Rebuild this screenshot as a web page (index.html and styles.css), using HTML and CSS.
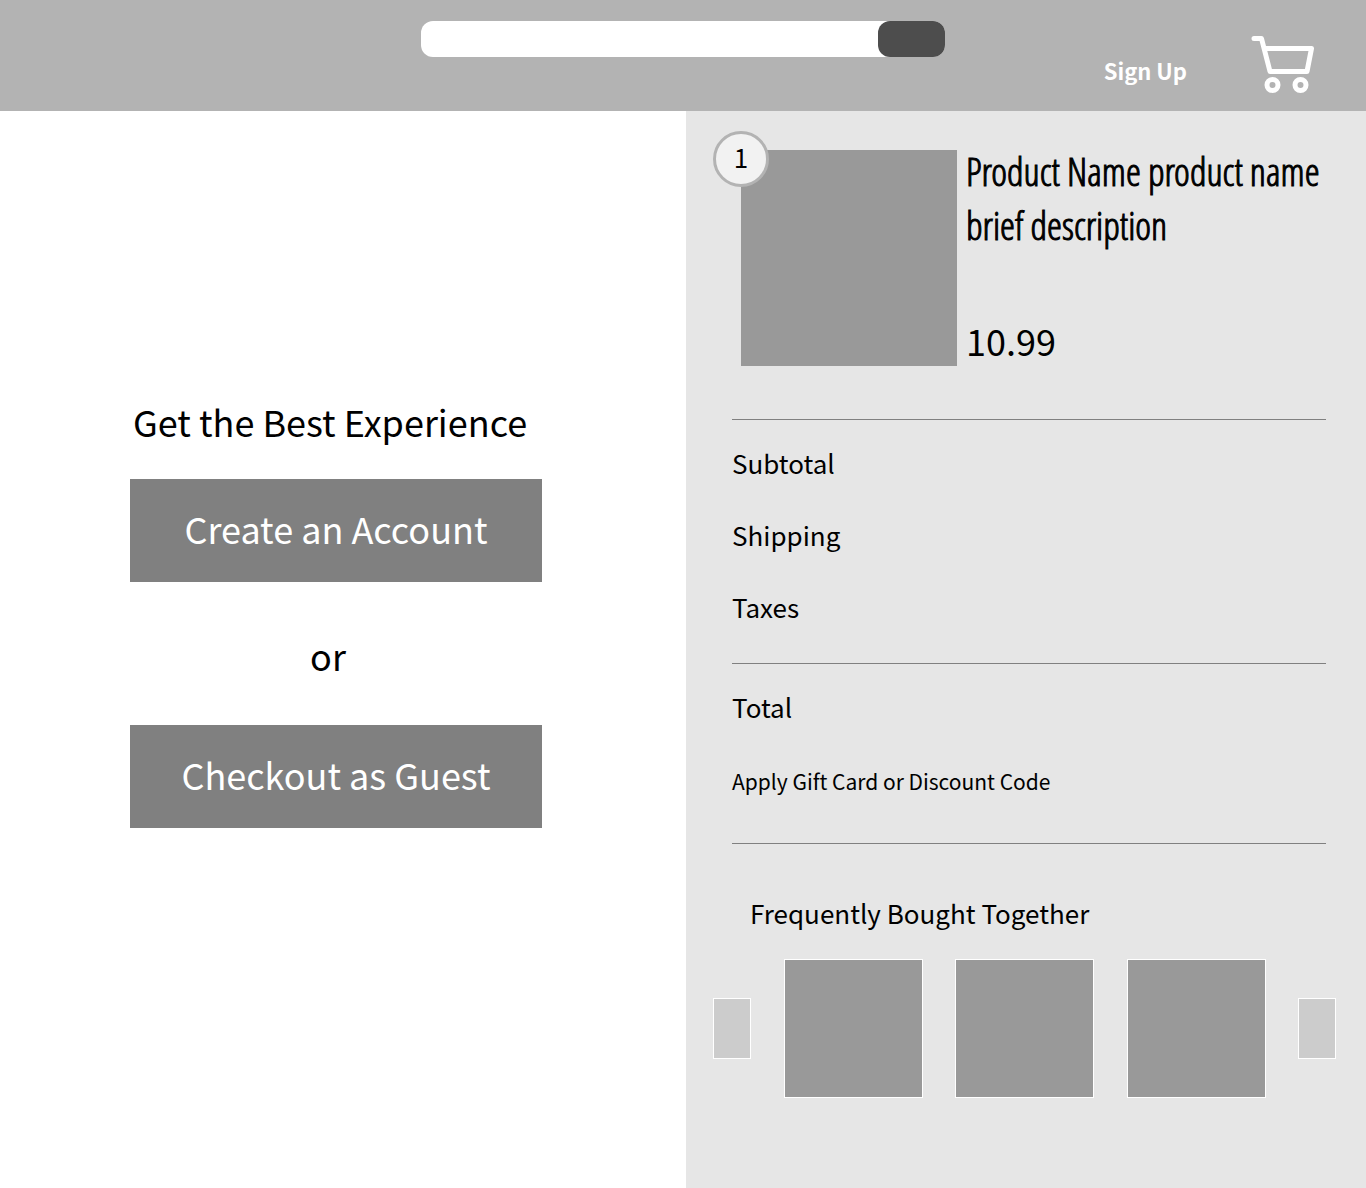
FILE: index.html
```html
<!DOCTYPE html>
<html lang="en">
<head>
<meta charset="utf-8">
<meta name="viewport" content="width=device-width, initial-scale=1">
<title>Checkout</title>
<link rel="stylesheet" href="styles.css">
</head>
<body>
<header class="topbar">
  <form class="search" role="search">
    <input class="search-input" type="search" aria-label="Search">
    <button class="search-button" type="submit" aria-label="Search"></button>
  </form>
  <nav class="account">
    <a class="sign-up" href="#">Sign Up</a>
    <a class="cart" href="#" aria-label="Cart">
      <svg class="cart-icon" viewBox="0 0 64 60" aria-hidden="true">
        <path d="M3 3.500H10.500L19 36.500H56L60.500 13.500H14" />
        <circle cx="21.500" cy="50" r="5.500" />
        <circle cx="49.500" cy="50" r="5.500" />
      </svg>
    </a>
  </nav>
</header>
<main class="checkout">
  <section class="options">
    <h1 class="options-title">Get the Best Experience</h1>
    <button class="option" type="button">Create an Account</button>
    <p class="or">or</p>
    <button class="option" type="button">Checkout as Guest</button>
  </section>
  <aside class="summary">
    <article class="product">
      <div class="product-image"><span class="quantity">1</span></div>
      <div class="product-details">
        <h2 class="product-name">Product Name product name brief description</h2>
        <p class="price">10.99</p>
      </div>
    </article>
    <ul class="lines">
      <li>Subtotal</li>
      <li>Shipping</li>
      <li>Taxes</li>
    </ul>
    <div class="lines">
      <p>Total</p>
      <button class="discount" type="button">Apply Gift Card or Discount Code</button>
    </div>
    <section class="related">
      <h2 class="related-title">Frequently Bought Together</h2>
      <div class="carousel">
        <button class="arrow" type="button" aria-label="Previous"></button>
        <a class="thumb" href="#" aria-label="Product 1"></a>
        <a class="thumb" href="#" aria-label="Product 2"></a>
        <a class="thumb" href="#" aria-label="Product 3"></a>
        <button class="arrow" type="button" aria-label="Next"></button>
      </div>
    </section>
  </aside>
</main>
</body>
</html>
```
FILE: styles.css
```css
* {
  box-sizing: border-box;
}

body {
  display: flex;
  flex-direction: column;
  min-height: 100vh;
  margin: 0;
  background: #fff;
  color: #000;
  font-family: "Noto Sans CJK SC", "Noto Sans", sans-serif;
  font-size: 26px;
  line-height: 28px;
}

h1, h2, p, ul {
  margin: 0;
  padding: 0;
  font-weight: 400;
}

button {
  padding: 0;
  border: 0;
  background: none;
  color: inherit;
  font: inherit;
  cursor: pointer;
}

/* Top bar */
.topbar {
  display: grid;
  grid-template-columns: 1fr 524px 1fr;
  align-items: start;
  height: 111px;
  padding-top: 21px;
  background: #b3b3b3;
}

.search {
  display: flex;
  grid-column: 2;
  height: 36px;
  border-radius: 12px;
  background: #fff;
}

.search-input {
  flex: 1;
  min-width: 0;
  padding: 0 16px;
  border: 0;
  background: none;
  font: inherit;
  font-size: 21px;
}

.search-button {
  width: 67px;
  border-radius: 12px;
  background: #4d4d4d;
}

.account {
  display: flex;
  justify-content: flex-end;
  gap: 64px;
  padding: 14px 51px 0 0;
}

.sign-up {
  padding-top: 21px;
  color: #fff;
  font-size: 22px;
  font-weight: 700;
  text-decoration: none;
}

.cart-icon {
  display: block;
  width: 64px;
  height: 60px;
  fill: none;
  stroke: #fff;
  stroke-width: 5;
  stroke-linecap: round;
  stroke-linejoin: round;
}

/* Page columns */
.checkout {
  display: grid;
  flex: 1;
  grid-template-columns: 343fr 340fr;
}

.options {
  display: flex;
  flex-direction: column;
  padding: 284px 144px 40px 130px;
}

.options-title,
.or,
.option,
.price {
  font-size: 36px;
  line-height: 52px;
}

.options-title {
  margin-bottom: 32px;
  padding-left: 3px;
}

.option {
  height: 103px;
  padding-bottom: 5px;
  background: #808080;
  color: #fff;
}

.or {
  padding: 47px 16px 44px 0;
  text-align: center;
}

/* Order summary */
.summary {
  padding: 39px 40px 90px 46px;
  background: #e6e6e6;
}

.product {
  display: flex;
  gap: 9px;
  padding: 0 0 53px 9px;
}

.product-image {
  position: relative;
  flex: none;
  width: 216px;
  height: 216px;
  background: #999;
}

.quantity {
  position: absolute;
  top: -19px;
  left: -28px;
  width: 56px;
  height: 56px;
  border: 3px solid #b3b3b3;
  border-radius: 50%;
  background: #f2f2f2;
  line-height: 46px;
  text-align: center;
}

.product-details {
  display: flex;
  flex-direction: column;
  justify-content: space-between;
}

.product-name {
  margin-top: -6px;
  font-family: "Open Sans Condensed Light", "Roboto Condensed", sans-serif;
  font-size: 38px;
  line-height: 54px;
  -webkit-text-stroke: 1px #000;
}

.lines {
  display: flex;
  flex-direction: column;
  align-items: flex-start;
  gap: 44px;
  padding: 29px 0 42px;
  border-top: 1px solid #808080;
  list-style: none;
}

.discount {
  margin-bottom: 4px;
  font-size: 21px;
  line-height: 32px;
}

.related {
  padding-top: 55px;
  border-top: 1px solid #808080;
}

.related-title {
  margin-bottom: 32px;
  padding-left: 18px;
  font-size: 26px;
}

.carousel {
  display: flex;
  align-items: center;
  justify-content: space-between;
  margin: 0 -10px 0 -19px;
}

.thumb {
  width: 139px;
  height: 139px;
  border: 1px solid #fff;
  background: #999;
}

.arrow {
  width: 38px;
  height: 61px;
  border: 1px solid #fff;
  background: #ccc;
}
```
